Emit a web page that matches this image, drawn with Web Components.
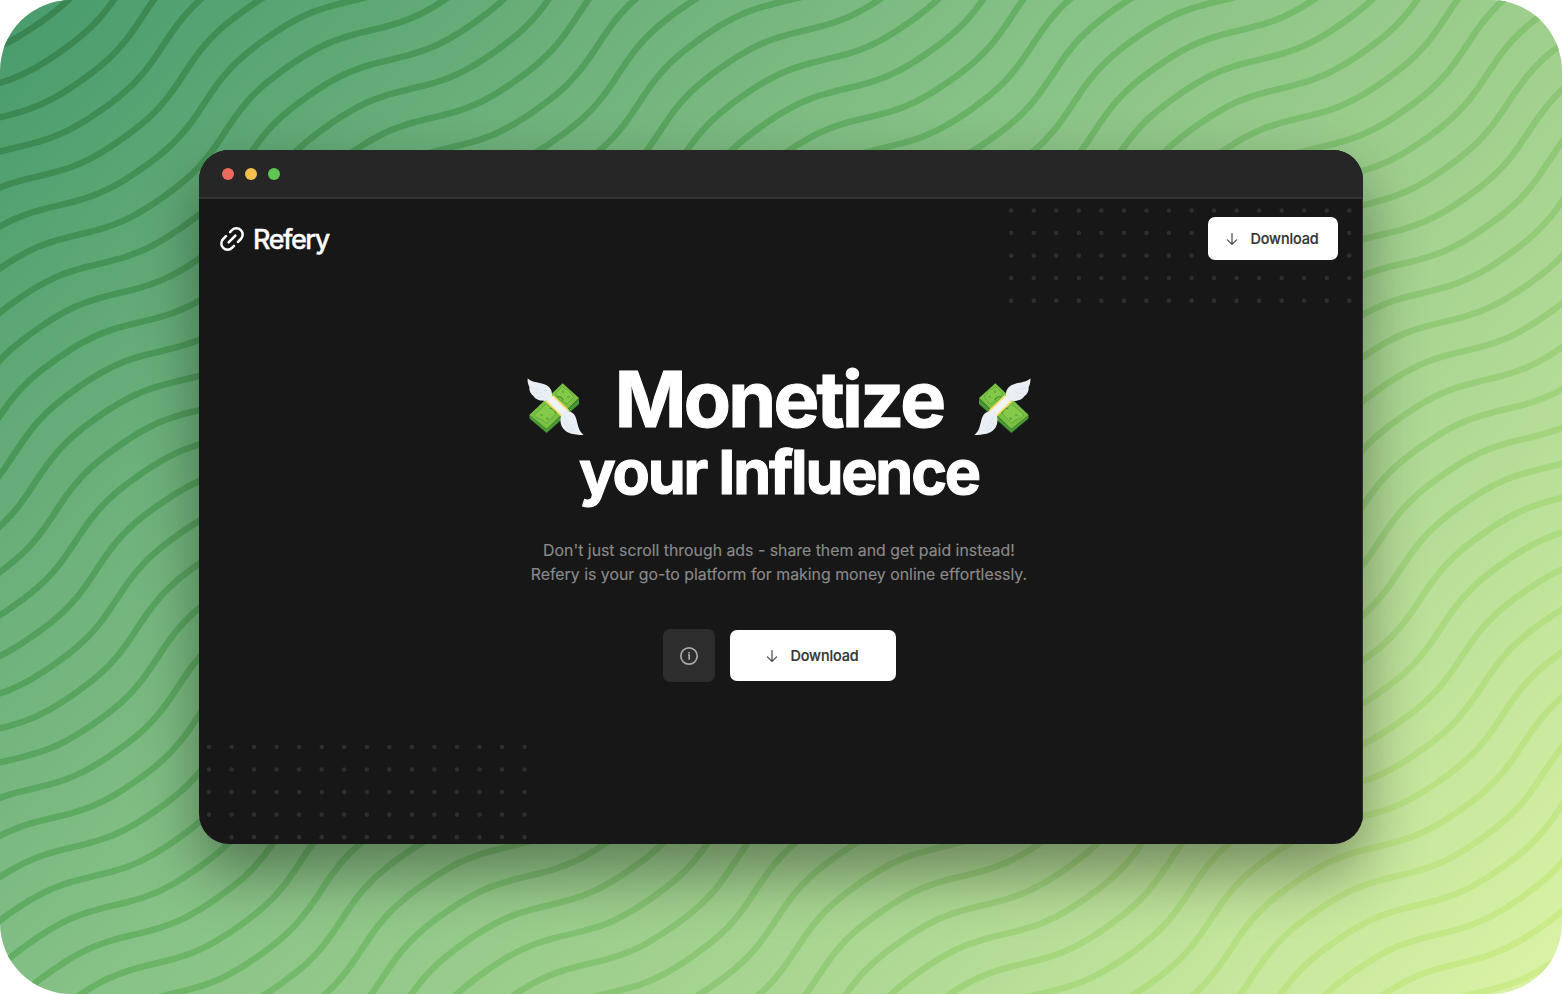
<!DOCTYPE html>
<html lang="en">
<head>
<meta charset="utf-8">
<title>Refery</title>
<style>
html,body{margin:0;padding:0;background:#fff;overflow:hidden}
body{font-family:Inter,"Liberation Sans",sans-serif;-webkit-font-smoothing:antialiased}
</style>
</head>
<body>
<wave-stage>
  <browser-window>
    <site-header>
      <brand-logo>Refery</brand-logo>
      <download-button style="--w:130px;--h:43px">Download</download-button>
    </site-header>
    <hero-section>
      <span slot="title">Monetize</span>
      <span slot="subtitle">your Influence</span>
      <span slot="line1">Don't just scroll through ads - share them and get paid instead!</span>
      <span slot="line2">Refery is your go-to platform for making money online effortlessly.</span>
      <info-button slot="actions"></info-button>
      <download-button slot="actions" style="--w:166px;--h:51px">Download</download-button>
    </hero-section>
  </browser-window>
</wave-stage>
<script>
const define = (name, html, setup) => customElements.define(name, class extends HTMLElement {
  constructor() {
    super();
    this.attachShadow({ mode: "open" }).innerHTML = html;
    if (setup) setup.call(this, this.shadowRoot);
  }
});

/* Rounded gradient backdrop with diagonal wave lines */
define("wave-stage", `
<style>
:host{display:block;position:relative;width:1562px;height:994px;box-sizing:border-box;padding:150px 199px;border-radius:71px;overflow:hidden}
svg{position:absolute;inset:0}
</style>
<svg width="1562" height="994" viewBox="0 0 1562 994">
  <defs>
    <linearGradient id="bg" gradientUnits="userSpaceOnUse" x1="142" y1="-142" x2="1420" y2="1136">
      <stop offset="0" stop-color="#479b6c"/><stop offset=".2" stop-color="#67ad79"/><stop offset=".4" stop-color="#84c085"/>
      <stop offset=".6" stop-color="#9dce8d"/><stop offset=".73" stop-color="#afd994"/><stop offset=".87" stop-color="#c6e79d"/><stop offset="1" stop-color="#ddf3a6"/>
    </linearGradient>
    <linearGradient id="ln" gradientUnits="userSpaceOnUse" x1="142" y1="-142" x2="1420" y2="1136">
      <stop offset="0" stop-color="#378350"/><stop offset=".2" stop-color="#4c995a"/><stop offset=".4" stop-color="#65b065"/>
      <stop offset=".6" stop-color="#84c272"/><stop offset=".73" stop-color="#99ce7a"/><stop offset=".87" stop-color="#b9e284"/><stop offset="1" stop-color="#d0ee8b"/>
    </linearGradient>
  </defs>
  <rect width="1562" height="994" fill="url(#bg)"/>
  <path id="waves" fill="none" stroke="url(#ln)" stroke-width="6.4"/>
</svg>
<slot></slot>`, function (root) {
  const a = 35 * Math.PI / 180, c = Math.cos(a), s = Math.sin(a);
  const gap = 35.6, len = 356, u0 = -70, v0 = 166.2;
  let d = "";
  for (let k = -6; k < 46; k++) {
    for (let u = -620; u <= 1340; u += 6) {
      const t = 2 * Math.PI * (u - u0) / len;
      const v = v0 + k * gap + 18.8 * Math.sin(t) + 1.2 * Math.sin(3 * t);
      d += (u === -620 ? "M" : "L") + (u * c + v * s).toFixed(1) + " " + (v * c - u * s).toFixed(1);
    }
  }
  root.getElementById("waves").setAttribute("d", d);
});

define("browser-window", `
<style>
:host{display:flex;flex-direction:column;position:relative;width:1164px;height:694px;border-radius:30px;background:#171717;box-shadow:0 28px 60px rgba(0,0,0,.38)}
.clip{position:relative;display:flex;flex-direction:column;height:100%;border-radius:30px;overflow:hidden}
.bar{display:flex;align-items:center;gap:11px;height:47px;padding:1px 0 0 23px;box-sizing:border-box;background:#262626;flex:none}
i{width:12px;height:12px;border-radius:50%}
.page{position:relative;flex:1;border-top:2px solid #333;border-right:1px solid #303030;display:flex;flex-direction:column}
.dots{position:absolute;left:0;top:0}
.content{position:relative;display:flex;flex-direction:column;flex:1}
</style>
<div class="clip">
<div class="bar"><i style="background:#ed6a5e"></i><i style="background:#f5bf4f"></i><i style="background:#61c554"></i></div>
<div class="page">
<svg class="dots" width="1163" height="645" viewBox="199 199 1163 645" fill="#2e2e2e"></svg>
<div class="content"><slot></slot></div>
</div></div>`, function (root) {
  let d = "";
  for (let r = 0; r < 5; r++) {
    for (let i = 0; i < 16; i++) d += `<circle cx="${1011.2 + i * 22.54}" cy="${210.5 + r * 22.54}" r="2.3"/>`;
    for (let i = 0; i < 15; i++) d += `<circle cx="${209 + i * 22.54}" cy="${747 + r * 22.54}" r="2.3"/>`;
  }
  root.querySelector(".dots").innerHTML = d;
});

define("site-header", `
<style>:host{display:flex;justify-content:space-between;align-items:center;height:43px;padding:18px 24px 0 18px;flex:none}</style><slot></slot>`);

define("brand-logo", `
<style>
:host{display:flex;align-items:center;gap:6px;color:#fff;font-size:27px;line-height:32px;font-weight:500;letter-spacing:-1.5px;padding-top:1px}
svg{flex:none}
span{padding-top:2px;-webkit-text-stroke:.3px #fff}
</style>
<svg width="30" height="30" viewBox="0 0 24 24" fill="none" stroke="#fff" stroke-width="2" stroke-linecap="round" stroke-linejoin="round"><g transform="rotate(-45 12 12)"><path d="M9.2 17H7A5 5 0 0 1 7 7h3.2M14.8 7H17a5 5 0 0 1 0 10h-3.2M8.2 12h7.6"/></g></svg>
<span><slot></slot></span>`);

define("download-button", `
<style>
:host{display:flex;align-items:center;justify-content:center;gap:10px;width:var(--w);height:var(--h);border-radius:7px;background:#fff;color:#343434;font-size:15px;font-weight:500;letter-spacing:-.1px}
span{display:block;transform:scaleX(.96);-webkit-text-stroke:.2px #343434}
</style>
<svg width="14" height="14" viewBox="0 0 14 14" fill="none" stroke="#444" stroke-width="1.2" stroke-linecap="round" stroke-linejoin="round"><path d="M7 1.6v10.8M2.4 7.8 7 12.4l4.6-4.6"/></svg>
<span><slot></slot></span>`);

define("info-button", `
<style>:host{display:flex;align-items:center;justify-content:center;width:52px;height:53px;border-radius:7px;background:#2d2d2d}</style>
<svg width="20" height="20" viewBox="0 0 20 20" fill="none" stroke="#a8a8a8" stroke-width="1.7"><circle cx="10" cy="10" r="8.2"/><path d="M9 9.2h1.2v4.6M10.1 5.9v1.6"/></svg>`);

/* Banknote stack with wings */
define("money-wings", `
<style>:host{display:block;width:62px;height:64px;flex:none}:host([flip]){transform:scaleX(-1)}svg{display:block}</style>
<svg width="62" height="64" viewBox="30 60 186 192">
  <path d="M43 180l52 40 97-90v18l-97 86-51-43z" fill="#3f8f2f"/>
  <path d="M44 186l51 42 97-88" fill="none" stroke="#65b043" stroke-width="2"/>
  <path d="M43 180 143 85l49 44-97 92z" fill="#7cc043"/>
  <path d="M57 180 95 145q3 8 15 12l14 18-30 30q-8-10-15-11-10-1-22-14zM122 114l20-19q10 9 21 10 1 11 14 21l-21 21q-8-9-18-11-12-5-16-22z" fill="#85c94b" stroke="#58a83a" stroke-width="2.6"/>
  <path d="M104 160q15-2 19 15M125 126q12-4 20 9" fill="none" stroke="#4b9832" stroke-width="4"/>
  <g fill="#62ad3f"><circle cx="80" cy="180" r="4"/><circle cx="97" cy="191" r="4"/><circle cx="144" cy="110" r="4"/><circle cx="160" cy="126" r="4"/></g>
  <path d="M91 140l24-20 48 46-23 20z" fill="#f8dc69"/>
  <path d="M97 138l15-14 46 44-15 14z" fill="#f0f3f6"/>
  <path d="M38 70C48 82 68 82 83 86c20 5 30 18 28 38-5 9-13 14-21 14-12 0-28-3-34-14-10-7-14-19-13-28-4-8-6-17-5-26z" fill="#e9eff4"/>
  <path d="M48 95c10 6 17 7 25 7M55 113c10 3 19 2 27-1M64 126c8 1 15-1 20-5" fill="none" stroke="#d6dfe6" stroke-width="2"/>
  <path d="M143 169c12-4 25-1 34 9 9 12 9 28 14 40 3 9 8 16 15 22-12 1-20-1-27-2-17-1-31-10-37-21-8-13-7-30 1-48z" fill="#e9eff4"/>
  <path d="M150 184c4 20 14 31 27 42M146 200c4 12 12 22 25 29" fill="none" stroke="#d6dfe6" stroke-width="2"/>
</svg>`);

define("hero-section", `
<style>
:host{display:flex;flex-direction:column;align-items:center;padding:99px 3px 0 0;color:#fff}
.row{display:flex;align-items:center;height:80px;gap:28px}
.t{font-size:77px;line-height:80px;font-weight:700;letter-spacing:-2.7px;white-space:nowrap;-webkit-text-stroke:1.1px #fff}
.s{font-size:61px;line-height:66px;font-weight:700;letter-spacing:-2.2px;white-space:nowrap;-webkit-text-stroke:1.1px #fff}
money-wings{margin-top:15px}
.p{margin-top:32.5px;font-size:16.3px;line-height:24.7px;color:#8a8a8a;text-align:center;white-space:nowrap;transform:scaleX(.9735);-webkit-text-stroke:.15px #8a8a8a}
.a{display:flex;align-items:center;gap:15px;margin-top:42.1px}
</style>
<div class="row"><money-wings></money-wings><div class="t"><slot name="title"></slot></div><money-wings flip></money-wings></div>
<div class="s"><slot name="subtitle"></slot></div>
<div class="p"><slot name="line1"></slot><br><slot name="line2"></slot></div>
<div class="a"><slot name="actions"></slot></div>`);
</script>
</body>
</html>
